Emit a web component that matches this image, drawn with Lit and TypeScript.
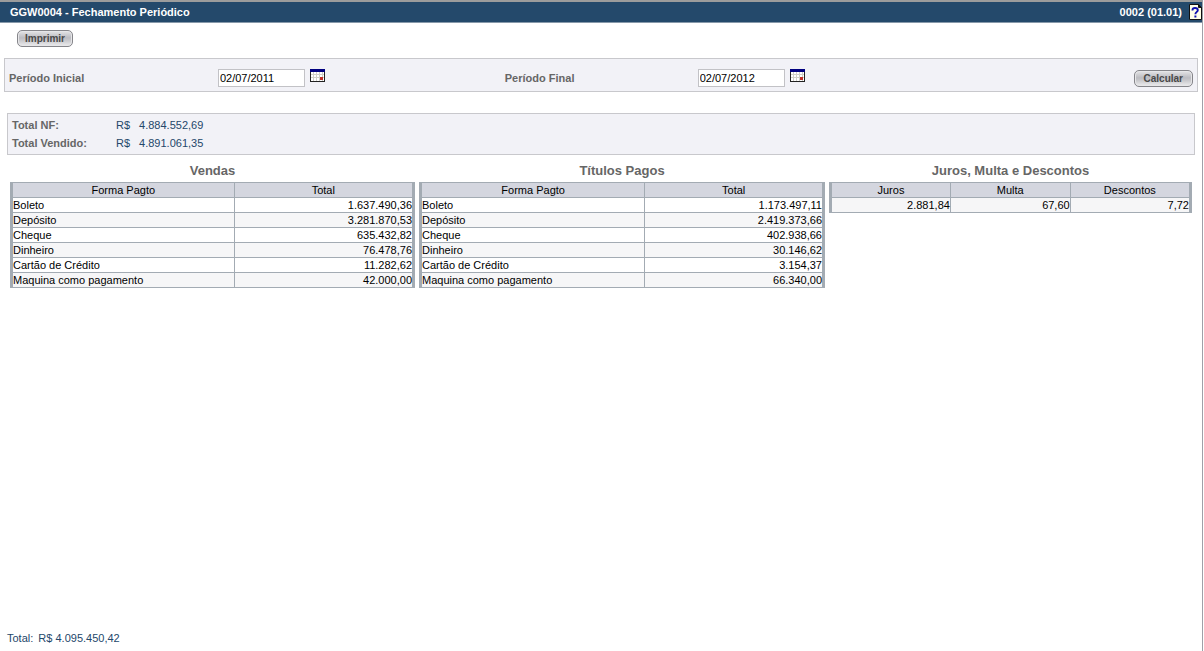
import { LitElement, html, css, svg } from "lit";
import { customElement, property } from "lit/decorators.js";

interface Column {
  label: string;
  share: number;
  numeric: boolean;
}

const payments = (first: number, second: number): Column[] => [
  { label: "Forma Pagto", share: first, numeric: false },
  { label: "Total", share: second, numeric: true },
];

const sales = [
  ["Boleto", "1.637.490,36"],
  ["Depósito", "3.281.870,53"],
  ["Cheque", "635.432,82"],
  ["Dinheiro", "76.478,76"],
  ["Cartão de Crédito", "11.282,62"],
  ["Maquina como pagamento", "42.000,00"],
];

const paidBills = [
  ["Boleto", "1.173.497,11"],
  ["Depósito", "2.419.373,66"],
  ["Cheque", "402.938,66"],
  ["Dinheiro", "30.146,62"],
  ["Cartão de Crédito", "3.154,37"],
  ["Maquina como pagamento", "66.340,00"],
];

const adjustmentColumns: Column[] = [
  { label: "Juros", share: 33.3, numeric: true },
  { label: "Multa", share: 33, numeric: true },
  { label: "Descontos", share: 33.7, numeric: true },
];

@customElement("data-grid")
export class DataGrid extends LitElement {
  @property() heading = "";
  @property({ attribute: false }) columns: Column[] = [];
  @property({ attribute: false }) rows: string[][] = [];
  @property({ type: Boolean }) shaded = false;

  static styles = css`
    :host {
      display: block;
      min-width: 0;
    }
    .grid {
      width: 100%;
      table-layout: fixed;
      border-collapse: separate;
      border-spacing: 0;
      font-size: 11px;
      line-height: 14px;
      color: #000;
    }
    .heading {
      padding: 0 0 2px;
      font-size: 13px;
      line-height: 18px;
      font-weight: bold;
      color: #666;
    }
    .head,
    .cell {
      padding: 0;
      border-bottom: 1px solid #a3abb3;
      border-left: 1px solid #a3abb3;
      font-weight: normal;
    }
    .head {
      background: #d4d6df;
      border-top: 1px solid #a3abb3;
      text-align: center;
    }
    .head:first-child,
    .cell:first-child {
      border-left-width: 3px;
    }
    .head:last-child,
    .cell:last-child {
      border-right: 3px solid #a3abb3;
    }
    .cell {
      text-align: left;
      white-space: nowrap;
    }
    .numeric {
      text-align: right;
    }
    .row:nth-child(even) .cell,
    .shaded .cell {
      background: #f6f6f7;
    }
  `;

  render() {
    return html`
      <table class="grid ${this.shaded ? "shaded" : ""}">
        <caption class="heading">${this.heading}</caption>
        <colgroup>
          ${this.columns.map((c) => html`<col style="width:${c.share}%" />`)}
        </colgroup>
        <thead>
          <tr>
            ${this.columns.map((c) => html`<th class="head" scope="col">${c.label}</th>`)}
          </tr>
        </thead>
        <tbody>
          ${this.rows.map(
            (row) => html`<tr class="row">
              ${row.map(
                (value, i) =>
                  html`<td class="cell ${this.columns[i].numeric ? "numeric" : ""}">${value}</td>`
              )}
            </tr>`
          )}
        </tbody>
      </table>
    `;
  }
}

const calendarIcon = svg`
  <svg width="15" height="13" viewBox="0 0 15 13" shape-rendering="crispEdges" aria-hidden="true">
    <rect width="15" height="13" fill="#222"/>
    <rect width="15" height="3" fill="#000080"/>
    <rect x="1" y="3" width="13" height="9" fill="#fff"/>
    <path d="M3.5 3v9M6.5 3v9M9.5 3v9M12.5 3v9M1 5.5h13M1 8.5h13" stroke="#d0d0c8" fill="none"/>
    <rect x="10" y="8" width="3" height="3" fill="#c03028"/>
  </svg>`;

const helpIcon = svg`
  <svg width="13" height="16" viewBox="0 0 13 16" aria-hidden="true">
    <path d="M.5.5h9l3 3v12H.5z" fill="#ffffe8" stroke="#111"/>
    <path d="M9.5.5v3h3z" fill="#111" stroke="#111"/>
    <path d="M3.5 6.6V6Q3.5 4 6 4Q8.8 4 8.8 6.2Q8.8 7.4 7.4 8.2Q6.4 8.8 6.4 10.2" fill="none" stroke="#1010b0" stroke-width="1.9"/>
    <rect x="5.4" y="11.5" width="2" height="2" fill="#1010b0"/>
  </svg>`;

@customElement("app-root")
export class AppRoot extends LitElement {
  static styles = css`
    :host {
      display: block;
      font-family: "Liberation Sans", Arial, sans-serif;
      font-size: 11px;
      color: #24476a;
    }
    .page {
      box-sizing: border-box;
      min-height: 100vh;
      display: flex;
      flex-direction: column;
      margin-right: 1px;
      border-right: 1px solid #a0a0a8;
      background: #fff;
    }
    .title-bar {
      display: flex;
      align-items: center;
      height: 20px;
      padding-left: 10px;
      border-top: 2px solid #9c9c9c;
      border-bottom: 1px solid #8799aa;
      background: #24496b;
      color: #fff;
    }
    .title {
      flex: 1;
      margin: 0;
      font-size: 11px;
      font-weight: bold;
    }
    .version {
      font-weight: bold;
      margin-right: 7px;
    }
    .icon-button {
      display: flex;
      padding: 0;
      border: 0;
      background: none;
      cursor: pointer;
    }
    .toolbar {
      padding: 7px 17px 11px;
      display: flex;
    }
    .push {
      box-sizing: border-box;
      height: 17px;
      padding: 0 7px;
      border: 1px solid #85858a;
      border-radius: 5px;
      background: linear-gradient(#e4e4e6, #bcbcc1 45%, #c6c6ca 60%, #ececee);
      box-shadow: inset 0 0 0 1px #e6e6e8;
      font: bold 10px/15px "Liberation Sans", Arial, sans-serif;
      color: #484848;
    }
    .push.wide {
      padding: 0 9px;
    }
    .period {
      display: grid;
      grid-template-columns: 209fr 287fr 193fr 436fr auto;
      align-items: center;
      margin: 0 4px;
      padding: 10px 4px 4px;
      border: 1px solid #c8c8cc;
      background: #f2f2f7;
    }
    .label {
      font-weight: bold;
      color: #666;
    }
    .field {
      display: flex;
      gap: 5px;
    }
    .date {
      box-sizing: border-box;
      width: 87px;
      height: 18px;
      padding: 1px;
      border: 1px solid #c2c2c6;
      background: #fff;
      font: 11px "Liberation Sans", Arial, sans-serif;
      color: #000;
    }
    .field .icon-button {
      align-self: flex-start;
    }
    .totals {
      display: grid;
      grid-template-columns: 95px auto 1fr;
      column-gap: 9px;
      margin: 21px 7px 0;
      padding: 2px 4px;
      border: 1px solid #c8c8cc;
      background: #f2f2f7;
      line-height: 18px;
    }
    .totals dt,
    .totals dd {
      margin: 0;
    }
    .totals dt {
      font-weight: bold;
      color: #666;
    }
    .tables {
      display: grid;
      grid-template-columns: 405fr 406fr 363fr;
      gap: 4px;
      margin: 7px 10px 0;
    }
    .footer {
      margin-top: auto;
      padding: 0 7px 5px;
      line-height: 16px;
    }
    .footer-label {
      margin-right: 2px;
    }
  `;

  render() {
    return html`
      <div class="page">
        <header class="title-bar">
          <h1 class="title">GGW0004 - Fechamento Periódico</h1>
          <span class="version">0002 (01.01)</span>
          <button class="icon-button" type="button" aria-label="Ajuda">${helpIcon}</button>
        </header>
        <div class="toolbar"><button class="push" type="button">Imprimir</button></div>
        <form class="period" @submit=${(e: Event) => e.preventDefault()}>
          <label class="label" for="start">Período Inicial</label>
          <div class="field">
            <input class="date" id="start" type="text" value="02/07/2011" />
            <button class="icon-button" type="button" aria-label="Calendário">${calendarIcon}</button>
          </div>
          <label class="label" for="end">Período Final</label>
          <div class="field">
            <input class="date" id="end" type="text" value="02/07/2012" />
            <button class="icon-button" type="button" aria-label="Calendário">${calendarIcon}</button>
          </div>
          <button class="push wide" type="submit">Calcular</button>
        </form>
        <dl class="totals">
          <dt>Total NF:</dt><dd>R$</dd><dd>4.884.552,69</dd>
          <dt>Total Vendido:</dt><dd>R$</dd><dd>4.891.061,35</dd>
        </dl>
        <main class="tables">
          <data-grid heading="Vendas" .columns=${payments(55.2, 44.8)} .rows=${sales}></data-grid>
          <data-grid heading="Títulos Pagos" .columns=${payments(55.5, 44.5)} .rows=${paidBills}></data-grid>
          <data-grid
            heading="Juros, Multa e Descontos"
            shaded
            .columns=${adjustmentColumns}
            .rows=${[["2.881,84", "67,60", "7,72"]]}
          ></data-grid>
        </main>
        <footer class="footer"><span class="footer-label">Total:</span> R$ 4.095.450,42</footer>
      </div>
    `;
  }
}
